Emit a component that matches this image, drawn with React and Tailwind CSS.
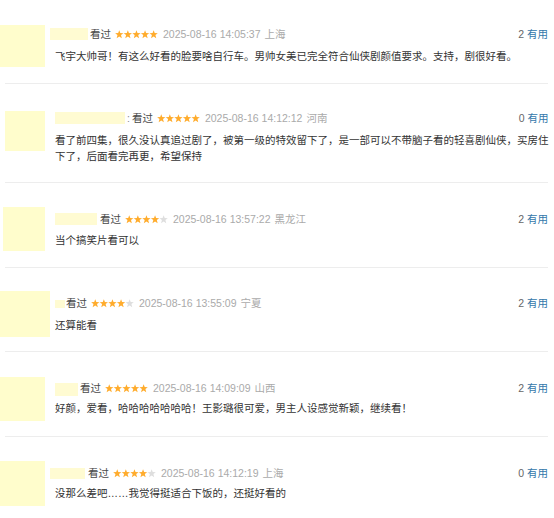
import React from "react";

const items = [
  {
    av: "ml-[-5px] mt-[25px] w-[45px] h-[42px]",
    name: "ml-[-5px] mt-[4px] w-[38px] h-[12px]",
    pad: "pt-[24px] pb-[19px]",
    tm: "mt-[4px]",
    after: null,
    kg: "ml-[2px]",
    stars: 5,
    date: "2025-08-16 14:05:37",
    region: "上海",
    count: 2,
    text: ["飞宇大帅哥！有这么好看的脸要啥自行车。男帅女美已完全符合仙侠剧颜值要求。支持，剧很好看。"],
  },
  {
    av: "ml-[0px] mt-[27px] w-[40px] h-[40px]",
    name: "ml-[0px] mt-[4px] w-[70px] h-[12px]",
    pad: "pt-[24px] pb-[18px]",
    tm: "mt-[4px]",
    after: ":",
    kg: "ml-[2px]",
    stars: 5,
    date: "2025-08-16 14:12:12",
    region: "河南",
    count: 0,
    text: [
      "看了前四集，很久没认真追过剧了，被第一级的特效留下了，是一部可以不带脑子看的轻喜剧仙侠，买房住",
      "下了，后面看完再更，希望保持",
    ],
  },
  {
    av: "ml-[-2px] mt-[24px] w-[42px] h-[44px]",
    name: "ml-[0px] mt-[4px] w-[42px] h-[12px]",
    pad: "pt-[26px] pb-[19px]",
    tm: "mt-[3px]",
    after: null,
    kg: "ml-[3px]",
    stars: 4,
    date: "2025-08-16 13:57:22",
    region: "黑龙江",
    count: 2,
    text: ["当个搞笑片看可以"],
  },
  {
    av: "ml-[-5px] mt-[23px] w-[50px] h-[46px]",
    name: "ml-[0px] mt-[7px] w-[10px] h-[8px]",
    pad: "pt-[25px] pb-[18px]",
    tm: "mt-[4px]",
    after: null,
    kg: "ml-[1px]",
    stars: 4,
    date: "2025-08-16 13:55:09",
    region: "宁夏",
    count: 2,
    text: ["还算能看"],
  },
  {
    av: "ml-[-5px] mt-[25px] w-[45px] h-[44px]",
    name: "ml-[0px] mt-[5px] w-[23px] h-[13px]",
    pad: "pt-[26px] pb-[20px]",
    tm: "mt-[2px]",
    after: null,
    kg: "ml-[2px]",
    stars: 5,
    date: "2025-08-16 14:09:09",
    region: "山西",
    count: 2,
    text: ["好颜，爱看，哈哈哈哈哈哈哈！王影璐很可爱，男主人设感觉新颖，继续看！"],
  },
  {
    av: "ml-[-5px] mt-[24px] w-[45px] h-[45px]",
    name: "ml-[-5px] mt-[5px] w-[35px] h-[11px]",
    pad: "pt-[26px] pb-[18px]",
    tm: "mt-[2px]",
    after: null,
    kg: "ml-[3px]",
    stars: 4,
    date: "2025-08-16 14:12:19",
    region: "上海",
    count: 0,
    text: ["没那么差吧……我觉得挺适合下饭的，还挺好看的"],
  },
];

function Star({ x, on }) {
  return (
    <polygon
      transform={`translate(${x} 0)`}
      points="4.25,0.2 5.3,3.1 8.4,3.2 6,5.1 6.85,8.2 4.25,6.4 1.65,8.2 2.5,5.1 0.1,3.2 3.2,3.1"
      fill={on ? "#ffac2d" : "#dedede"}
    />
  );
}

function Stars({ n }) {
  return (
    <svg width="43" height="9" viewBox="0 0 43 9" className="block">
      {[0, 1, 2, 3, 4].map((i) => (
        <Star key={i} x={i * 8.6} on={i < n} />
      ))}
    </svg>
  );
}

export default function App() {
  return (
    <div
      className="w-[554px] h-[518px] overflow-hidden bg-white pl-[5px] pr-[6px]"
      style={{ fontFamily: '"Liberation Sans", "Noto Sans CJK SC", sans-serif' }}
    >
      {items.map((it, idx) => (
        <div key={idx} className="flex border-b border-[#ededed]">
          <div className="w-[50px] shrink-0">
            <div className={`${it.av} bg-[#fffdcc]`} />
          </div>
          <div className={`flex-1 ${it.pad}`}>
            <div className="flex items-center h-[20px] text-[10.5px] leading-[20px]">
              <div className="flex items-start self-start h-[20px]">
                <div className={`${it.name} bg-[#fffbd2]`} />
              </div>
              {it.after && (
                <span className="ml-[2px] text-[#888]">{it.after}</span>
              )}
              <span className={`${it.kg} text-[#494949]`}>看过</span>
              <span className="ml-[4px]">
                <Stars n={it.stars} />
              </span>
              <span className="ml-[5px] text-[#aaaaaa]">{it.date}</span>
              <span className="ml-[4px] text-[#aaaaaa]">{it.region}</span>
              <span className="ml-auto text-[#666]">{it.count}</span>
              <span className="ml-[3px] text-[#3377aa]">有用</span>
            </div>
            <div className={`${it.tm} text-[10.5px] leading-[16px] text-[#333]`}>
              {it.text.map((t, i) => (
                <div key={i} className="whitespace-nowrap">{t}</div>
              ))}
            </div>
          </div>
        </div>
      ))}
    </div>
  );
}
